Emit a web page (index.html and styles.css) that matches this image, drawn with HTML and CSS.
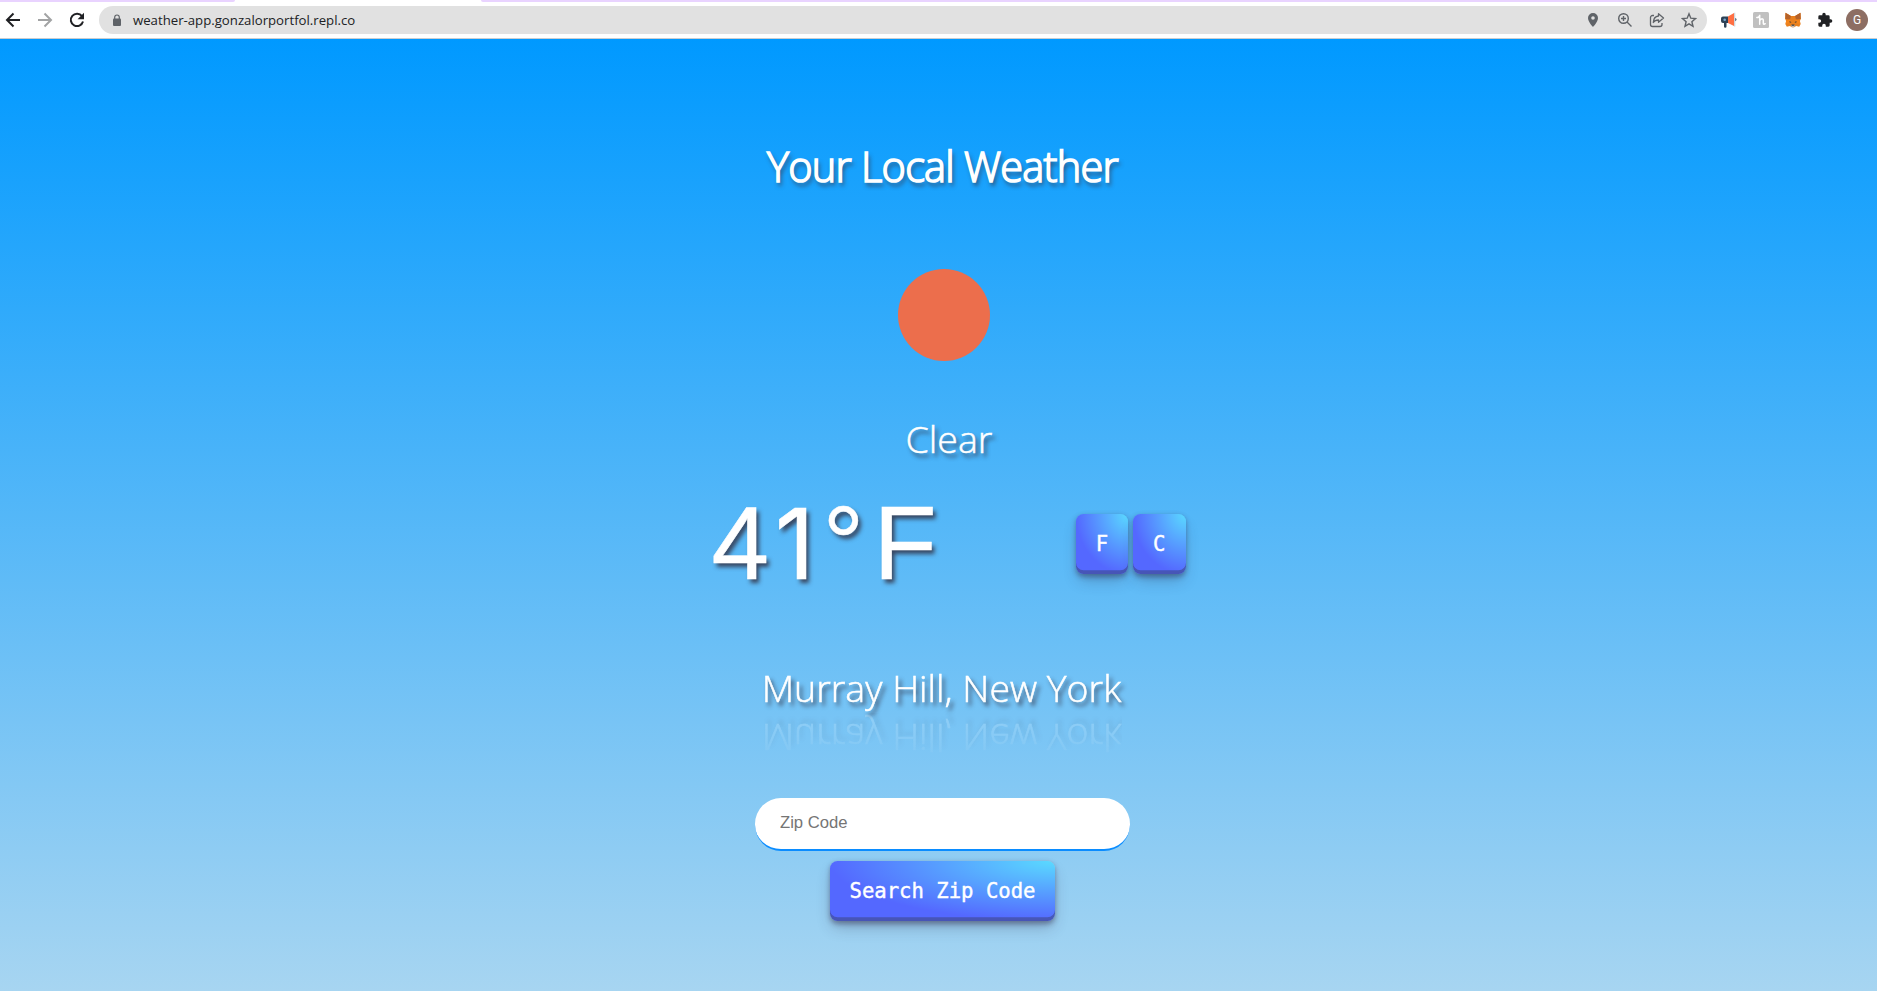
FILE: index.html
```html
<!DOCTYPE html>
<html lang="en">
<head>
<meta charset="utf-8">
<title>Weather App</title>
<link rel="stylesheet" href="styles.css">
</head>
<body>
<header class="chrome">
  <div class="tabs"><span class="tab-left"></span><span class="tab-right"></span></div>
  <div class="toolbar">
    <nav class="nav">
      <svg width="16" height="16" viewBox="0 0 16 16" fill="none" stroke="#202124" stroke-width="2"><path d="M15 8H2.500M8.500 1.500 2 8l6.500 6.500"/></svg>
      <svg width="16" height="16" viewBox="0 0 16 16" fill="none" stroke="#a2a3a4" stroke-width="2"><path d="M1 8h12.500M7.500 1.500 14 8l-6.500 6.500"/></svg>
      <svg width="16" height="16" viewBox="0 0 16 16"><path d="M13 4.200A6.200 6.200 0 1 0 14 9.500" fill="none" stroke="#202124" stroke-width="2"/><path d="M15 .8v6.400H8.600z" fill="#202124"/></svg>
    </nav>
    <div class="omnibox">
      <svg class="lock" width="10" height="13" viewBox="0 0 10 13"><rect x="1" y="4.500" width="8" height="7.500" rx="1" fill="#5f6368"/><path d="M2.700 5V3.300a2.300 2.300 0 0 1 4.600 0V5" fill="none" stroke="#5f6368" stroke-width="1.200"/></svg>
      <span class="url">weather-app.gonzalorportfol.repl.co</span>
      <div class="actions">
        <svg width="16" height="16" viewBox="0 0 16 16"><path fill="#5f6368" fill-rule="evenodd" d="M8 1a5 5 0 0 0-5 5c0 3.700 5 9 5 9s5-5.300 5-9a5 5 0 0 0-5-5zm0 3.200a1.800 1.800 0 1 1 0 3.600 1.800 1.800 0 0 1 0-3.600z"/></svg>
        <svg width="16" height="16" viewBox="0 0 16 16" fill="none" stroke="#5f6368" stroke-width="1.400"><circle cx="6.500" cy="6.500" r="4.800"/><path d="M10 10l4.500 4.500M6.500 4v5M4 6.500h5"/></svg>
        <svg width="16" height="16" viewBox="0 0 16 16" fill="none" stroke="#5f6368" stroke-width="1.300" stroke-linejoin="round"><path d="M5 3.500H3.500a2 2 0 0 0-2 2v7a2 2 0 0 0 2 2h7.500a2 2 0 0 0 2-2V11"/><path d="M9.500 1.700 14.500 6l-5 4.300V8C7 8 5.500 8.600 4.300 10.500 4.500 6.500 6.500 4.300 9.500 4z"/></svg>
        <svg width="16" height="16" viewBox="0 0 16 16" fill="none" stroke="#5f6368" stroke-width="1.400"><path d="M8 1.800l1.800 4.400 4.700.4-3.600 3.100 1.100 4.600-4-2.500-4 2.500 1.100-4.600L1.500 6.600l4.700-.4z"/></svg>
      </div>
    </div>
    <div class="extensions">
      <svg width="16" height="16" viewBox="0 0 16 16"><path d="M2 4.500h5v6.500H5.500v3.500a1.200 1.200 0 0 1-2.500 0V11H2a2 2 0 0 1-2-2V6.500a2 2 0 0 1 2-2z" fill="#2d4257"/><circle cx="3.700" cy="7.700" r="1.300" fill="#79a9d1"/><path d="M7 4.500 13 1v13l-6-3z" fill="#ff6f43"/><path d="M13 .8h1.300v13.800H13z" fill="#cfd8de"/><path d="M14.300 6a1.700 1.700 0 0 1 0 3.200z" fill="#2d4257"/></svg>
      <svg width="16" height="16" viewBox="0 0 16 16"><rect width="16" height="16" rx="1.500" fill="#c0c0c0"/><path d="M3.800 5.500c1.700.3 2.900-1 2.900-2.700v9.400M6.700 9c.4-2.400 3.600-3 3.600-.6v2.800c0 1.200 1 1.200 1.900.5" fill="none" stroke="#fff" stroke-width="1.500" stroke-linecap="round"/></svg>
      <svg width="16" height="16" viewBox="0 0 16 16"><path d="M.5.8 6 4h4L15.500.8l.4 6-1 2.200.8 3-1.500 2.800-3-.8L9 15.300H7L4.800 14l-3 .8L.3 12l.8-3-1-2.200z" fill="#e8801f"/><path d="M.5.8 6 4 5 7.500.3 7zM15.500.8 10 4l1 3.500 4.700-.5z" fill="#b5622a"/><path d="M1 9l4-1.500L6 11l-5 .8zM15 9l-4-1.500L10 11l5 .8z" fill="#f6851b"/><path d="M6 13h4l-.8 2.200H6.800z" fill="#c9bdb3"/><path d="M4.500 9l2 1.200-1.700.5zM11.500 9l-2 1.200 1.700.5zM6.600 12.500h2.800v1.200H6.600z" fill="#33383d"/></svg>
      <svg width="16" height="16" viewBox="0 0 24 24"><path fill="#202124" d="M20.500 11H19V7a2 2 0 0 0-2-2h-4V3.500a2.500 2.500 0 0 0-5 0V5H4a2 2 0 0 0-2 2v3.800h1.500a2.700 2.700 0 0 1 0 5.400H2V20a2 2 0 0 0 2 2h3.800v-1.500a2.700 2.700 0 0 1 5.400 0V22H17a2 2 0 0 0 2-2v-4h1.500a2.500 2.500 0 0 0 0-5z"/></svg>
      <span class="avatar">G</span>
    </div>
  </div>
</header>
<main class="page">
  <h1 class="title">Your Local Weather</h1>
  <div class="sun"></div>
  <p class="condition">Clear</p>
  <section class="reading">
    <p class="temp"><span class="degrees">4<span class="one">1</span>°</span><span>F</span></p>
    <div class="units">
      <button class="btn">F</button>
      <button class="btn">C</button>
    </div>
  </section>
  <p class="place">Murray Hill, New York</p>
  <form class="search">
    <input class="zip" type="text" placeholder="Zip Code">
    <button class="btn" type="button">Search Zip Code</button>
  </form>
</main>
</body>
</html>
```
FILE: styles.css
```css
* { box-sizing: border-box; }
body {
  margin: 0;
  height: 991px;
  display: flex;
  flex-direction: column;
  overflow: hidden;
  font-family: "Open Sans", sans-serif;
}
h1, p { margin: 0; }
svg { display: block; flex: none; }

.chrome {
  flex: none;
  height: 39px;
  background: #fff;
  border-bottom: 1px solid #c8ccd0;
}
.tabs { height: 2px; display: flex; justify-content: space-between; }
.tab-left { width: 235px; background: #e9d3ff; border-bottom-right-radius: 4px; }
.tab-right { width: 1396px; background: #e9d3ff; border-bottom-left-radius: 4px; }
.toolbar {
  height: 36px;
  display: flex;
  align-items: center;
  padding: 0 8px 0 5px;
}
.nav { width: 94px; display: flex; gap: 16px; }
.omnibox {
  width: 1608px;
  height: 28px;
  display: flex;
  align-items: center;
  padding: 0 10px 0 13px;
  border-radius: 14px;
  background: #e1e1e1;
}
.url {
  margin-left: 11px;
  font: 13.2px/18px "Open Sans", sans-serif;
  color: #202124;
}
.actions { margin-left: auto; display: flex; gap: 16px; }
.extensions { margin-left: 14px; display: flex; align-items: center; gap: 16px; }
.avatar {
  width: 22px;
  height: 22px;
  margin-left: -3px;
  border-radius: 50%;
  background: #8d6e63;
  color: #fff;
  font: 12px/22px Roboto, sans-serif;
  text-align: center;
}

.page {
  flex: 1;
  display: flex;
  flex-direction: column;
  align-items: center;
  padding: 98px 0 0 8px;
  background: linear-gradient(#0099ff, #a7d5f1);
  color: #fff;
}
.title {
  font-size: 41.5px;
  line-height: 58px;
  font-weight: 300;
  letter-spacing: -.75px;
  -webkit-text-stroke: 1.6px #fff;
  text-shadow: 2px 4px 4px rgba(50, 50, 70, .85);
}
.sun {
  width: 92px;
  height: 92px;
  margin: 74px 0 0 2px;
  border-radius: 50%;
  background: #ec6e4c;
}
.condition {
  margin: 52px 0 0 13px;
  font-size: 37.5px;
  line-height: 51px;
  font-weight: 300;
  -webkit-text-stroke: .5px #fff;
  text-shadow: 3px 4px 4px rgba(50, 50, 70, .85);
}
.reading {
  width: 474px;
  margin: 23px 0 0 12px;
  height: 114px;
  display: flex;
  align-items: center;
  justify-content: space-between;
}
.temp {
  display: flex;
  gap: 11.5px;
  margin-bottom: 2px;
  font: 103.5px/114px "Liberation Sans", Arial, sans-serif;
  -webkit-text-stroke: .5px #fff;
  text-shadow: 3px 4px 4px rgba(50, 50, 70, .85);
}
.degrees { letter-spacing: -2px; white-space: nowrap; }
.one {
  display: inline-block;
  width: 55.6px;
  padding-right: 8px;
  direction: rtl;
  letter-spacing: 0;
  font: 98px/1 Inter, sans-serif;
}
.units { display: flex; gap: 5px; }
.btn {
  height: 60px;
  padding: 0 20px;
  border: 0;
  border-radius: 7.5px;
  background: radial-gradient(100% 100% at 100% 0, #5adaff 0, #5468ff 100%);
  box-shadow: rgba(45, 35, 66, .4) 0 2.5px 5px, rgba(45, 35, 66, .3) 0 8.75px 16.25px -3.75px, rgba(58, 65, 111, .5) 0 -3.75px 0 inset;
  color: #fff;
  font: 20.6px/1 "DejaVu Sans Mono", monospace;
  -webkit-text-stroke: .4px #fff;
  white-space: nowrap;
}
.place {
  margin: 61px 2px 0 0;
  font-size: 37.5px;
  line-height: 51px;
  font-weight: 300;
  -webkit-text-stroke: .5px #fff;
  text-shadow: 3px 4px 4px rgba(50, 50, 70, .85);
  -webkit-box-reflect: below 0 linear-gradient(transparent 0%, rgba(255, 255, 255, .2));
}
.search {
  margin-top: 85px;
  display: flex;
  flex-direction: column;
  align-items: center;
  gap: 10px;
}
.zip {
  width: 375px;
  height: 53px;
  padding: 0 25px 2px;
  border: 0;
  border-bottom: 2px solid #0a8cff;
  border-radius: 26px;
  background: #fff;
  font: 16.67px "Liberation Sans", Arial, sans-serif;
}
.zip::placeholder { color: #757575; }
```
